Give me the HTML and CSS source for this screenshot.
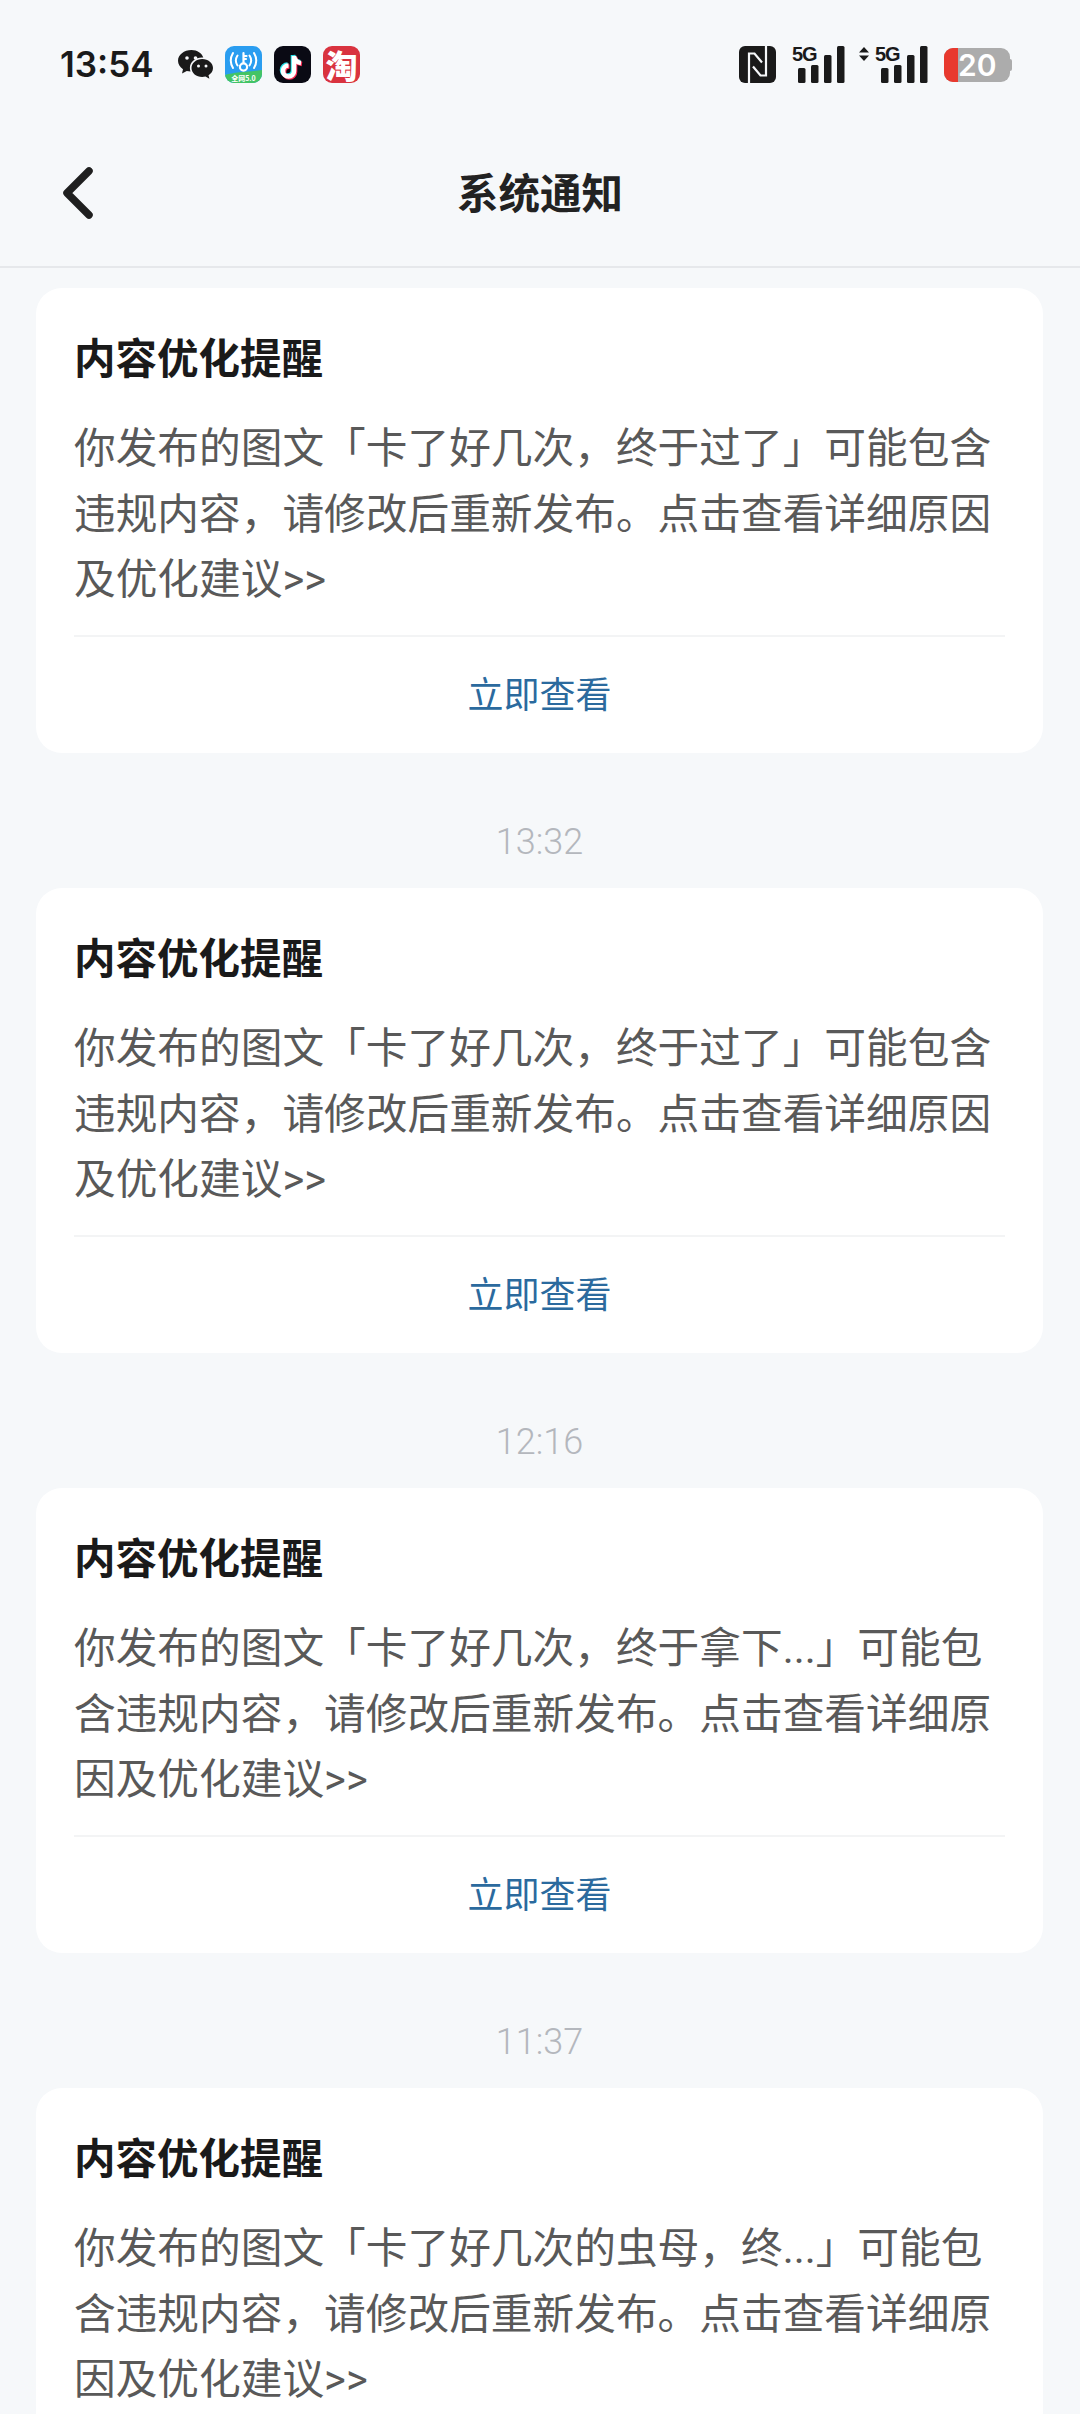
FILE: index.html
```html
<!DOCTYPE html>
<html lang="zh-CN">
<head>
<meta charset="utf-8">
<title>系统通知</title>
<link rel="stylesheet" href="styles.css">
</head>
<body>
<div class="screen">
  <header class="top">
    <div class="status">
      <div class="status-left">
        <span class="clock">13:54</span>
        <svg class="ic-wechat" viewBox="0 0 35 29" aria-hidden="true">
          <path fill="#1a1a1a" d="M13.5 0C6 0 0 4.800 0 10.800c0 3.400 2 6.400 5 8.400L4 23.500l4.800-2.600c1.300.3 2.500.5 3.700.5-.4-1.200-.6-2.300-.6-3.400 0-5.800 5.400-10.400 12.100-10.400.5 0 .9 0 1.300.1C24 3.200 19.200 0 13.500 0z"/>
          <path fill="#1a1a1a" d="M35 18c0-5-4.800-9-10.800-9S13.500 13 13.500 18s4.800 9 10.700 9c1.100 0 2.200-.1 3.300-.4l3.900 2.200-.9-3.500C33.200 23.600 35 21 35 18z"/>
          <circle cx="9" cy="8" r="1.800" fill="#f6f8fa"/><circle cx="17.500" cy="8" r="1.800" fill="#f6f8fa"/>
          <circle cx="20.500" cy="16" r="1.500" fill="#f6f8fa"/><circle cx="28" cy="16" r="1.500" fill="#f6f8fa"/>
        </svg>
        <svg class="app" viewBox="0 0 37 37" aria-hidden="true">
          <defs><clipPath id="rr"><rect width="37" height="37" rx="9"/></clipPath></defs>
          <g clip-path="url(#rr)">
            <rect width="37" height="37" fill="#2a9df0"/>
            <path d="M0 29c10-3 25-3 37-5v13H0z" fill="#43c465"/>
            <g fill="none" stroke="#fff" stroke-width="2" stroke-linecap="round">
              <path d="M8 7c-3 5-3 10 0 15M29 7c3 5 3 10 0 15M12.500 9.500c-2 3-2 7 0 10M24.500 9.500c2 3 2 7 0 10"/>
              <circle cx="18.500" cy="21" r="3.600" stroke-width="2.200"/>
              <path d="M18.500 17V7M18.500 10h3M18.500 13h2.500" stroke-width="2.200"/>
            </g>
            <text class="app-tag" x="18.500" y="35">全网5.0</text>
          </g>
        </svg>
        <svg class="app" viewBox="0 0 37 37" aria-hidden="true">
          <rect width="37" height="37" rx="9" fill="#0a0a14"/>
          <g fill="none" stroke-width="4.600">
            <path stroke="#25e0e8" d="M19 9v15a5.500 5.500 0 1 1-5.500-5.500M19 9c.5 4 3 6.500 7 7"/>
            <path stroke="#fe2c55" d="M21 11v15a5.500 5.500 0 1 1-5.500-5.500M21 11c.5 4 3 6.500 7 7"/>
            <path stroke="#fff" d="M20 10v15a5.500 5.500 0 1 1-5.500-5.500M20 10c.5 4 3 6.500 7 7"/>
          </g>
        </svg>
        <span class="app taobao">淘</span>
      </div>
      <div class="status-right">
        <svg class="ic-nfc" viewBox="0 0 37 37" aria-hidden="true">
          <rect width="37" height="37" rx="6" fill="#1a1a1a"/>
          <path fill="none" stroke="#f6f8fa" stroke-width="2.200" d="M10 37V7.500h5.500l7.500 9M27 0v29.500h-5.500l-7.500-9"/>
        </svg>
        <div class="signal">
          <span class="five-g">5G</span>
          <svg class="bars" viewBox="0 0 47 37" aria-hidden="true">
            <rect x="0" y="22" width="7.500" height="15" rx="1.500"/><rect x="13" y="19" width="7.500" height="18" rx="1.500"/>
            <rect x="26" y="9" width="7.500" height="28" rx="1.500"/><rect x="39" y="0" width="7.500" height="37" rx="1.500"/>
          </svg>
        </div>
        <svg class="updown" viewBox="0 0 10 14" aria-hidden="true"><path fill="#1a1a1a" d="M5 0l5 5.500H0zM5 14L0 8.500h10z"/></svg>
        <div class="signal signal-second">
          <span class="five-g">5G</span>
          <svg class="bars" viewBox="0 0 47 37" aria-hidden="true">
            <rect x="0" y="22" width="7.500" height="15" rx="1.500"/><rect x="13" y="19" width="7.500" height="18" rx="1.500"/>
            <rect x="26" y="9" width="7.500" height="28" rx="1.500"/><rect x="39" y="0" width="7.500" height="37" rx="1.500"/>
          </svg>
        </div>
        <div class="battery"><span class="battery-fill"></span><span class="battery-num">20</span><span class="battery-nub"></span></div>
      </div>
    </div>
    <div class="toolbar">
      <svg class="back" viewBox="0 0 34 54" aria-hidden="true"><path d="M28 5L6 27l22 22" fill="none" stroke="#1f1f1f" stroke-width="7.500" stroke-linecap="round" stroke-linejoin="round"/></svg>
      <h1 class="page-title">系统通知</h1>
    </div>
  </header>
  <main class="list">
    <article class="card">
      <h2 class="card-title">内容优化提醒</h2>
      <p class="card-body">你发布的图文「卡了好几次&#xFF0C;终于过了」可能包含违规内容&#xFF0C;请修改后重新发布。点击查看详细原因及优化建议&gt;&gt;</p>
      <div class="card-link">立即查看</div>
    </article>
    <div class="time">13:32</div>
    <article class="card">
      <h2 class="card-title">内容优化提醒</h2>
      <p class="card-body">你发布的图文「卡了好几次&#xFF0C;终于过了」可能包含违规内容&#xFF0C;请修改后重新发布。点击查看详细原因及优化建议&gt;&gt;</p>
      <div class="card-link">立即查看</div>
    </article>
    <div class="time">12:16</div>
    <article class="card">
      <h2 class="card-title">内容优化提醒</h2>
      <p class="card-body">你发布的图文「卡了好几次&#xFF0C;终于拿下...」可能包含违规内容&#xFF0C;请修改后重新发布。点击查看详细原因及优化建议&gt;&gt;</p>
      <div class="card-link">立即查看</div>
    </article>
    <div class="time">11:37</div>
    <article class="card">
      <h2 class="card-title">内容优化提醒</h2>
      <p class="card-body card-body-last">你发布的图文「卡了好几次的虫母&#xFF0C;终...」可能包含违规内容&#xFF0C;请修改后重新发布。点击查看详细原因及优化建议&gt;&gt;</p>
    </article>
  </main>
</div>
</body>
</html>
```
FILE: styles.css
```css
* { box-sizing: border-box; }
html, body { margin: 0; padding: 0; height: 100%; }
body {
  background: #f6f8fa;
  font-family: Roboto, "Noto Sans CJK SC", sans-serif;
  overflow: hidden;
}
.screen { height: 2414px; overflow: hidden; }

.top { height: 268px; border-bottom: 2px solid #e6e8eb; }
.status {
  height: 129px;
  padding: 46px 70px 46px 60px;
  display: flex;
  justify-content: space-between;
  align-items: flex-start;
}
.status-left { display: flex; align-items: center; height: 37px; }
.clock {
  font-family: Inter, sans-serif;
  font-weight: 600;
  font-size: 35px;
  line-height: 37px;
  color: #1a1a1a;
  width: 118px;
}
.ic-wechat { width: 35px; height: 29px; margin-right: 12px; }
.app { width: 37px; height: 37px; margin-right: 12px; display: block; flex: none; }
.app-tag {
  font-family: "Noto Sans CJK SC", sans-serif;
  font-size: 7px;
  font-weight: 700;
  fill: #fff;
  text-anchor: middle;
}
.taobao {
  margin-right: 0;
  background: #d9333f;
  border-radius: 9px;
  color: #fff;
  font-family: "Noto Sans CJK SC", sans-serif;
  font-weight: 900;
  font-size: 32px;
  line-height: 36px;
  text-align: center;
}
.status-right { display: flex; align-items: flex-start; height: 37px; }
.ic-nfc { width: 37px; height: 37px; margin-right: 16px; }
.signal { position: relative; width: 54px; height: 37px; }
.signal-second { margin-right: 15px; margin-left: 6px; }
.five-g {
  position: absolute;
  left: 0;
  top: 0;
  font-family: "Liberation Sans", sans-serif;
  font-weight: 700;
  font-size: 20px;
  line-height: 17px;
  letter-spacing: -1px;
  color: #1a1a1a;
}
.bars { position: absolute; left: 6px; top: 0; width: 47px; height: 37px; fill: #1a1a1a; }
.updown { width: 10px; height: 14px; margin-left: 13px; margin-top: 1px; }
.battery {
  position: relative;
  width: 66px;
  height: 34px;
  margin-top: 2px;
  border-radius: 9px;
  background: #acacac;
}
.battery-fill {
  position: absolute;
  left: 0;
  top: 0;
  width: 14px;
  height: 34px;
  background: #e8392e;
  border-radius: 9px 0 0 9px;
}
.battery-num {
  position: absolute;
  left: 14px;
  top: 0;
  font-family: Inter, sans-serif;
  font-weight: 600;
  font-size: 30px;
  line-height: 34px;
  color: #fff;
}
.battery-nub {
  position: absolute;
  right: -2px;
  top: 11px;
  width: 2px;
  height: 12px;
  background: #acacac;
  border-radius: 0 2px 2px 0;
}

.toolbar {
  height: 137px;
  position: relative;
  display: flex;
  align-items: center;
  justify-content: center;
}
.back { position: absolute; left: 61px; top: 37px; width: 34px; height: 54px; }
.page-title {
  margin: 0 0 14px;
  font-family: "Noto Sans CJK SC", sans-serif;
  font-size: 41.500px;
  line-height: 60px;
  font-weight: 700;
  color: #222;
}

.list { padding: 20px 37px 0 36px; }
.card {
  background: #fff;
  border-radius: 26px;
  padding: 38px 38px 0;
  height: 465px;
}
.card-title {
  margin: 0;
  font-family: "Noto Sans CJK SC", sans-serif;
  font-size: 41.500px;
  line-height: 60px;
  font-weight: 700;
  color: #1a1a1a;
}
.card-body {
  margin: 30px 0 0;
  font-size: 41.700px;
  line-height: 65.500px;
  color: #595959;
  height: 221px;
  border-bottom: 2px solid #f3f4f5;
}
.card-body-last { height: auto; border-bottom: 0; }
.card-link {
  height: 110px;
  display: flex;
  align-items: center;
  justify-content: center;
  font-size: 36px;
  color: #2b6a9e;
}
.time {
  height: 135px;
  padding-top: 42px;
  display: flex;
  align-items: center;
  justify-content: center;
  font-size: 36px;
  font-weight: 300;
  color: #b4b7bd;
}
```
